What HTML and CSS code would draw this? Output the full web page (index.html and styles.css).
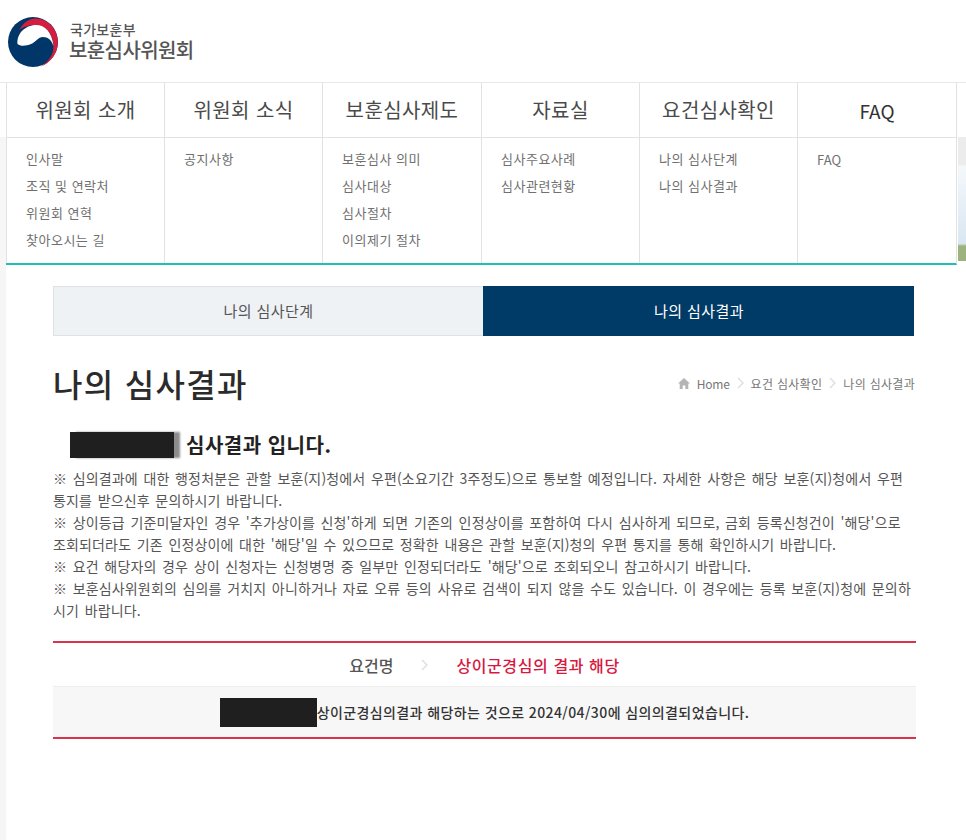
FILE: index.html
```html
<!DOCTYPE html>
<html lang="ko">
<head>
<meta charset="utf-8">
<title>나의 심사결과</title>
<link rel="stylesheet" href="styles.css">
</head>
<body>
<header class="logo-bar">
  <svg class="emblem" viewBox="0 0 50 50" width="50" height="50" aria-hidden="true">
    <circle cx="25" cy="25" r="25" fill="#003668"/>
    <path d="M11 13C16 5 22 1 28 1.500C40 2 49.800 12 49.800 25C49.800 37 42 46 33 49.500C41 44 45.500 38 45.500 29C45.500 17 37 8 28 8C21 8 15 10 11 13z" fill="#d71d3d"/>
    <path d="M9.500 27C8.500 17 17 8 28 8C37 8 44 15 45.500 29C43.500 23 40 20 35 20C30 20 28 25 23 27C19 28.500 13 30 9.500 27z" fill="#fff"/>
  </svg>
  <div class="brand">
    <span class="brand-sub">국가보훈부</span>
    <span class="brand-main">보훈심사위원회</span>
  </div>
</header>

<div class="shell">
  <div class="page">
    <nav class="gnb">
      <div class="gnb-col">
        <div class="gnb-title">위원회 소개</div>
        <ul class="gnb-sub"><li>인사말</li><li>조직 및 연락처</li><li>위원회 연혁</li><li>찾아오시는 길</li></ul>
      </div>
      <div class="gnb-col">
        <div class="gnb-title">위원회 소식</div>
        <ul class="gnb-sub"><li>공지사항</li></ul>
      </div>
      <div class="gnb-col">
        <div class="gnb-title">보훈심사제도</div>
        <ul class="gnb-sub"><li>보훈심사 의미</li><li>심사대상</li><li>심사절차</li><li>이의제기 절차</li></ul>
      </div>
      <div class="gnb-col">
        <div class="gnb-title">자료실</div>
        <ul class="gnb-sub"><li>심사주요사례</li><li>심사관련현황</li></ul>
      </div>
      <div class="gnb-col">
        <div class="gnb-title">요건심사확인</div>
        <ul class="gnb-sub"><li>나의 심사단계</li><li>나의 심사결과</li></ul>
      </div>
      <div class="gnb-col">
        <div class="gnb-title gnb-latin">FAQ</div>
        <ul class="gnb-sub gnb-sub-latin"><li>FAQ</li></ul>
      </div>
    </nav>

    <main class="content">
      <div class="tabs">
        <div class="tab">나의 심사단계</div>
        <div class="tab tab-on">나의 심사결과</div>
      </div>

      <div class="title-row">
        <h1>나의 심사결과</h1>
        <div class="crumbs">
          <svg class="home" viewBox="0 0 12 11" width="12" height="11" aria-hidden="true"><path d="M6 0 0 5.500h1.700V11h3V7.500h2.600V11h3V5.500H12z" fill="#b5b5b5"/></svg>
          <span class="crumb-home">Home</span>
          <svg class="chev" viewBox="0 0 7 12" width="7" height="12" aria-hidden="true"><path d="M1 1l5 5-5 5" fill="none" stroke="#dcdcdc" stroke-width="1.300"/></svg>
          <span>요건 심사확인</span>
          <svg class="chev" viewBox="0 0 7 12" width="7" height="12" aria-hidden="true"><path d="M1 1l5 5-5 5" fill="none" stroke="#dcdcdc" stroke-width="1.300"/></svg>
          <span>나의 심사결과</span>
        </div>
      </div>

      <h2 class="result-head"><span class="mask mask-head"></span>심사결과 입니다.</h2>

      <div class="notes">
        <p>※ 심의결과에 대한 행정처분은 관할 보훈(지)청에서 우편(소요기간 3주정도)으로 통보할 예정입니다. 자세한 사항은 해당 보훈(지)청에서 우편<br>통지를 받으신후 문의하시기 바랍니다.</p>
        <p>※ 상이등급 기준미달자인 경우 '추가상이를 신청'하게 되면 기존의 인정상이를 포함하여 다시 심사하게 되므로, 금회 등록신청건이 '해당'으로<br>조회되더라도 기존 인정상이에 대한 '해당'일 수 있으므로 정확한 내용은 관할 보훈(지)청의 우편 통지를 통해 확인하시기 바랍니다.</p>
        <p>※ 요건 해당자의 경우 상이 신청자는 신청병명 중 일부만 인정되더라도 '해당'으로 조회되오니 참고하시기 바랍니다.</p>
        <p>※ 보훈심사위원회의 심의를 거치지 아니하거나 자료 오류 등의 사유로 검색이 되지 않을 수도 있습니다. 이 경우에는 등록 보훈(지)청에 문의하<br>시기 바랍니다.</p>
      </div>

      <section class="result">
        <div class="result-top">
          <span class="req">요건명</span>
          <svg class="chev" viewBox="0 0 7 12" width="7" height="12" aria-hidden="true"><path d="M1 1l5 5-5 5" fill="none" stroke="#dcdcdc" stroke-width="1.300"/></svg>
          <span class="verdict">상이군경심의 결과 해당</span>
        </div>
        <div class="result-body"><span class="mask mask-body"></span><span>상이군경심의결과 해당하는 것으로 2024/04/30에 심의의결되었습니다.</span></div>
      </section>
    </main>
  </div>
  <div class="side-photo"></div>
</div>
</body>
</html>
```

FILE: styles.css
```css
* { box-sizing: border-box; }
html, body { margin: 0; padding: 0; }
body {
  width: 966px;
  height: 840px;
  overflow: hidden;
  background: #fff;
  color: #444;
  font-family: "Noto Sans CJK KR", "Noto Sans", sans-serif;
}
ul { list-style: none; margin: 0; padding: 0; }
h1, h2, p { margin: 0; font-weight: normal; }

.logo-bar {
  height: 82px;
  display: flex;
  align-items: flex-start;
  padding: 17px 0 0 8px;
  gap: 11px;
}
.brand { display: flex; flex-direction: column; padding-top: 4px; color: #555; }
.brand-sub { font-size: 14px; line-height: 17px; font-weight: 500; padding-left: 1px; letter-spacing: 0.3px; }
.brand-main { font-size: 20px; line-height: 24px; font-weight: 500; letter-spacing: -0.6px; }

.shell {
  display: flex;
  border-top: 1px solid #e8e8e8;
  height: 758px;
}
.page {
  width: 958px;
  padding-left: 6px;
  background: linear-gradient(#fff 54px, #f6f6f6 54px) left top / 6px 100% no-repeat;
}
.side-photo {
  width: 8px;
  height: 124px;
  margin-top: 54px;
  background: linear-gradient(#ececec 0, #ececec 22%, #f4f8fb 24%, #d9e6f1 86%, #9db37f 88%, #9db37f 100%);
}

.gnb {
  display: grid;
  grid-template-columns: 158px 158px 159px 158px 158px 159px;
  width: 951px;
  height: 182px;
  border-bottom: 2px solid #1fbfb8;
  border-right: 1px solid #e2e2e2;
}
.gnb-col { border-left: 1px solid #e2e2e2; display: flex; flex-direction: column; }
.gnb-title {
  height: 55px;
  border-bottom: 1px solid #e2e2e2;
  text-align: center;
  font-size: 20px;
  line-height: 53px;
  color: #4a4a4a;
  letter-spacing: 0.4px;
}
.gnb-latin { font-size: 19px; line-height: 55px; color: #333; letter-spacing: 0; }
.gnb-sub { padding: 7px 0 0 19px; }
.gnb-sub li { font-size: 13px; line-height: 27px; height: 27px; color: #707070; letter-spacing: 0.5px; }
.gnb-sub-latin { padding-top: 8px; }
.gnb-sub-latin li { letter-spacing: 0; }

.content { width: 862px; margin-left: 47px; }

.tabs {
  display: grid;
  grid-template-columns: 430px 431px;
  margin-top: 21px;
  height: 50px;
}
.tab {
  background: #eff2f5;
  border: 1px solid #dde2e7;
  border-right: 0;
  text-align: center;
  font-size: 15px;
  line-height: 47px;
  color: #555;
  letter-spacing: 0.4px;
}
.tab-on { background: #003a66; border-color: #003a66; color: #fff; }

.title-row {
  display: flex;
  justify-content: space-between;
  align-items: center;
  height: 50px;
  margin-top: 24px;
}
h1 { font-size: 32px; font-weight: 500; line-height: 46px; height: 50px; color: #2b2b2b; letter-spacing: 1.3px; }
.crumbs { display: flex; align-items: center; gap: 7px; font-size: 12px; color: #777; letter-spacing: 0.3px; margin-bottom: 4px; }
.crumb-home { letter-spacing: -0.2px; }
.chev { flex: none; }

.result-head {
  display: flex;
  align-items: center;
  height: 28px;
  margin-top: 21px;
  padding-left: 17px;
  font-size: 20px;
  line-height: 28px;
  font-weight: 700;
  color: #222;
  letter-spacing: 0.5px;
}
.mask { display: inline-block; background: #1f1f1f; }
.mask-head { width: 104px; height: 26px; margin-right: 12px; box-shadow: 6px 0 2px #8c8c8c; filter: blur(0.6px); }

.notes { margin-top: 8px; font-size: 14px; line-height: 22px; color: #555; letter-spacing: 0.15px; word-spacing: 1.5px; }
.notes p { white-space: nowrap; }

.result { margin-top: 20px; width: 863px; }
.result-top {
  height: 45px;
  border-top: 2px solid #d8344f;
  display: flex;
  align-items: center;
  justify-content: center;
  gap: 28px;
  font-size: 16px;
  font-weight: 500;
}
.req { color: #555; }
.verdict { color: #d7193f; letter-spacing: 0.6px; }
.result-body {
  height: 53px;
  background: #f7f7f7;
  border-top: 1px solid #eee;
  border-bottom: 2px solid #d8344f;
  display: flex;
  align-items: center;
  justify-content: center;
  font-size: 14px;
  font-weight: 500;
  color: #333;
  letter-spacing: 0.4px;
}
.mask-body { width: 97px; height: 29px; filter: blur(0.6px); }
```
